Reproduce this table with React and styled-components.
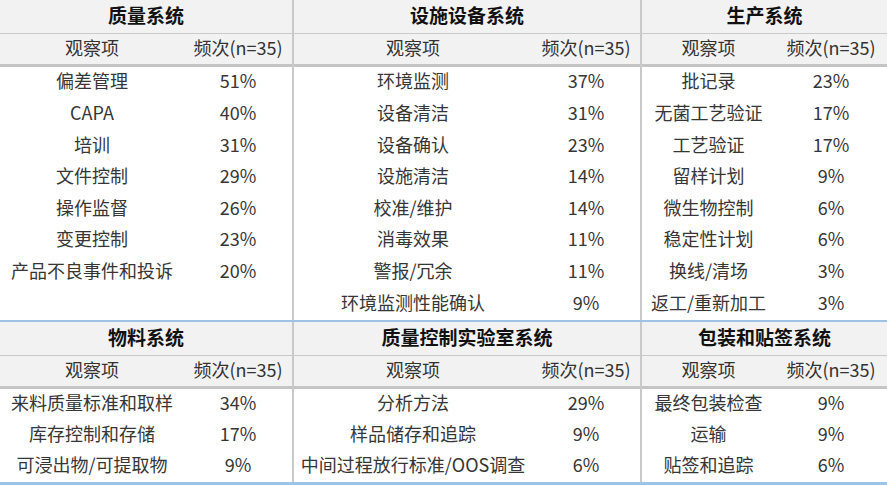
import React from "react";
import styled, { createGlobalStyle } from "styled-components";

const GlobalStyle = createGlobalStyle`
  html, body {
    margin: 0;
    padding: 0;
    background: #ffffff;
  }
  body {
    font-family: "Noto Sans CJK SC", "Noto Sans", sans-serif;
    color: #363636;
  }
  * {
    box-sizing: border-box;
  }
`;

const bands = [
  {
    rowHeight: 31.625,
    sections: [
      {
        title: "质量系统",
        freqWidth: 108,
        rows: [
          ["偏差管理", "51%"],
          ["CAPA", "40%"],
          ["培训", "31%"],
          ["文件控制", "29%"],
          ["操作监督", "26%"],
          ["变更控制", "23%"],
          ["产品不良事件和投诉", "20%"],
        ],
      },
      {
        title: "设施设备系统",
        freqWidth: 108,
        rows: [
          ["环境监测", "37%"],
          ["设备清洁", "31%"],
          ["设备确认", "23%"],
          ["设施清洁", "14%"],
          ["校准/维护", "14%"],
          ["消毒效果", "11%"],
          ["警报/冗余", "11%"],
          ["环境监测性能确认", "9%"],
        ],
      },
      {
        title: "生产系统",
        freqWidth: 112,
        rows: [
          ["批记录", "23%"],
          ["无菌工艺验证", "17%"],
          ["工艺验证", "17%"],
          ["留样计划", "9%"],
          ["微生物控制", "6%"],
          ["稳定性计划", "6%"],
          ["换线/清场", "3%"],
          ["返工/重新加工", "3%"],
        ],
      },
    ],
  },
  {
    rowHeight: 31,
    sections: [
      {
        title: "物料系统",
        freqWidth: 108,
        rows: [
          ["来料质量标准和取样", "34%"],
          ["库存控制和存储", "17%"],
          ["可浸出物/可提取物", "9%"],
        ],
      },
      {
        title: "质量控制实验室系统",
        freqWidth: 108,
        rows: [
          ["分析方法", "29%"],
          ["样品储存和追踪", "9%"],
          ["中间过程放行标准/OOS调查", "6%"],
        ],
      },
      {
        title: "包装和贴签系统",
        freqWidth: 112,
        rows: [
          ["最终包装检查", "9%"],
          ["运输", "9%"],
          ["贴签和追踪", "6%"],
        ],
      },
    ],
  },
];

const Table = styled.div`
  width: 887px;
`;

const Band = styled.div`
  display: grid;
  grid-template-columns: 294px 348px 1fr;
  border-bottom: ${(p) => p.$edge}px solid #9dc3e6;
`;

const Section = styled.div`
  display: flex;
  flex-direction: column;
  border-right: ${(p) => (p.$last ? "none" : "2px solid #c9c9c9")};
`;

const Title = styled.div`
  height: 34px;
  padding-bottom: 5px;
  display: flex;
  align-items: center;
  justify-content: center;
  background: #f2f2f2;
  border-bottom: 1px solid #c9c9c9;
  font-size: 19px;
  line-height: 1;
  font-weight: 700;
  color: #111111;
`;

const Row = styled.div`
  display: grid;
  grid-template-columns: 1fr ${(p) => p.$freq}px;
  height: ${(p) => p.$h}px;
  padding-bottom: 5px;
  align-items: center;
  font-size: 18px;
  line-height: 1;
  white-space: nowrap;
`;

const HeadRow = styled(Row)`
  background: #f2f2f2;
  border-bottom: 3px solid #c4c4c4;
  color: #333333;
`;

const Cell = styled.span`
  text-align: center;
`;

const Body = styled.div`
  flex: 1;
`;

const App = () => (
  <>
    <GlobalStyle />
    <Table>
      {bands.map((band, bi) => (
        <Band key={bi} $edge={bi === bands.length - 1 ? 3 : 2}>
          {band.sections.map((sec, si) => (
            <Section key={sec.title} $last={si === band.sections.length - 1}>
              <Title>{sec.title}</Title>
              <HeadRow $freq={sec.freqWidth} $h={33}>
                <Cell>观察项</Cell>
                <Cell>频次(n=35)</Cell>
              </HeadRow>
              <Body>
                {sec.rows.map(([item, freq]) => (
                  <Row key={item} $freq={sec.freqWidth} $h={band.rowHeight}>
                    <Cell>{item}</Cell>
                    <Cell>{freq}</Cell>
                  </Row>
                ))}
              </Body>
            </Section>
          ))}
        </Band>
      ))}
    </Table>
  </>
);

export default App;
